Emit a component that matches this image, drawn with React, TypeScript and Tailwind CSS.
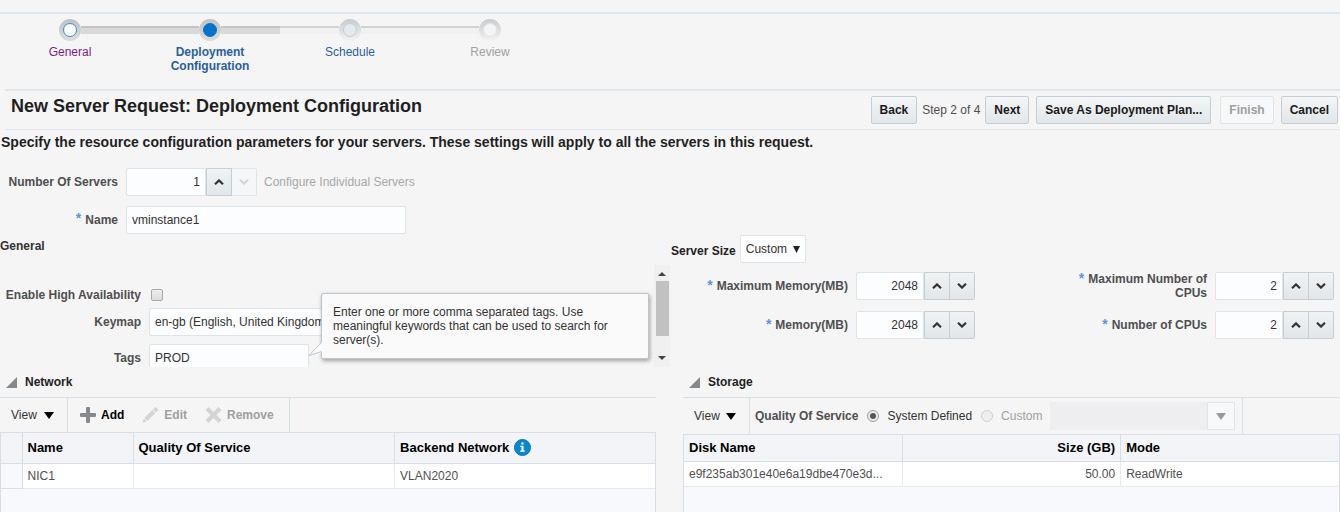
import React from "react";

const inputBox = "h-7 rounded-xs border border-[#dfe4e7] bg-[#fcfdfe] px-[5px] text-xs text-[#333333] outline-none";
const labelText = "text-xs font-bold text-[#4f4f4f]";
const buttonBase = "h-7 rounded-xs border px-2 text-xs font-bold whitespace-nowrap";
const buttonOn = "border-[#c4ced7] bg-linear-to-b from-[#f3f5f6] to-[#e3e7ea] text-[#1a1a1a]";
const buttonOff = "border-[#dfe4e7] bg-[#f6f8fa] text-[#9e9e9e]";

function Chevron({ up }: { up?: boolean }) {
  return (
    <svg width="10" height="6" viewBox="0 0 10 6" fill="none" stroke="currentColor" strokeWidth="2.2" aria-hidden="true">
      {up ? <path d="M1 5.2 L5 1.4 L9 5.2" /> : <path d="M1 0.8 L5 4.6 L9 0.8" />}
    </svg>
  );
}

function Caret({ small }: { small?: boolean }) {
  return small ? (
    <svg width="7" height="7" viewBox="0 0 7 7" fill="currentColor" aria-hidden="true">
      <path d="M0 0 H7 L3.5 7 Z" />
    </svg>
  ) : (
    <svg width="10" height="7" viewBox="0 0 10 7" fill="currentColor" aria-hidden="true">
      <path d="M0 0 H10 L5 7 Z" />
    </svg>
  );
}

function Spinner({ id, value, wide, downDisabled }: { id: string; value: string; wide?: boolean; downDisabled?: boolean }) {
  const step = "flex h-7 items-center justify-center border";
  return (
    <div className="flex shrink-0">
      <input id={id} inputMode="numeric" defaultValue={value} className={`${inputBox} text-right ${wide ? "w-20" : "w-17"}`} />
      <button type="button" aria-label="Increase" className={`${step} w-[26px] border-[#c4ced7] bg-linear-to-b from-[#f0f3f4] to-[#e2e6e9] text-[#333333]`}>
        <Chevron up />
      </button>
      <button
        type="button"
        aria-label="Decrease"
        disabled={downDisabled}
        className={`${step} w-[25px] rounded-r-xs border-l-0 ${downDisabled ? "border-[#dfe4e7] bg-[#f4f6f7] text-[#d2d5d8]" : "border-[#c4ced7] bg-linear-to-b from-[#f0f3f4] to-[#e2e6e9] text-[#333333]"}`}
      >
        <Chevron />
      </button>
    </div>
  );
}

function Required() {
  return <span className="mr-1 self-start text-sm leading-3 font-bold text-[#5b96dc]">*</span>;
}

type Step = { name: string; label: string; ring: string; dot: string; left: string; right: string };

const doneBar = "bg-[#d8d9d9] border-t-2 border-[#c3c5c5]";
const todoBar = "bg-[#f1f1f1] border-t-2 border-[#d0d2d3]";
const doneRing = "bg-linear-to-b from-[#bfc1c2] to-[#dcdddd]";
const todoRing = "bg-linear-to-b from-[#c9cbcc] to-[#f3f3f3]";

const steps: Step[] = [
  { name: "General", label: "text-[#7b1f86]", ring: doneRing, dot: "border-[#3a8ad8] bg-white", left: "", right: doneBar },
  { name: "Deployment Configuration", label: "font-bold text-[#2a5f9e]", ring: doneRing, dot: "border-[#0572ce] bg-[#0572ce]", left: doneBar, right: doneBar },
  { name: "Schedule", label: "text-[#2a5f9e]", ring: todoRing, dot: "border-[#c4ced7] bg-[#e5e9ec]", left: todoBar, right: todoBar },
  { name: "Review", label: "text-[#a0a0a0]", ring: todoRing, dot: "border-[#dfe6eb] bg-[#f3f5f7]", left: todoBar, right: "" },
];

function Train() {
  return (
    <ol className="flex h-[75px] pt-[5px]">
      {steps.map((s) => (
        <li key={s.name} className="w-[140px] text-center text-xs leading-[14px]">
          <div className="flex items-center">
            <span className={`h-2 flex-1 ${s.left}`} />
            <span className={`flex size-[22px] items-center justify-center rounded-full ${s.ring}`}>
              <span className={`size-[14px] rounded-full border ${s.dot}`} />
            </span>
            <span className={`h-2 flex-1 ${s.right}`} />
          </div>
          <a href="#" className={`mx-auto mt-1 block w-20 ${s.label}`}>{s.name}</a>
        </li>
      ))}
    </ol>
  );
}

function SectionTitle({ children }: { children: React.ReactNode }) {
  return (
    <h2 className="flex h-[31px] items-center gap-2 border-b border-[#d6dfe6] pl-1.5 text-xs font-bold text-[#222222]">
      <svg width="11" height="11" viewBox="0 0 11 11" aria-hidden="true">
        <path d="M11 0 V11 H0 Z" fill="#85898d" />
      </svg>
      {children}
    </h2>
  );
}

const th = "border border-[#d6dfe6] bg-[#f2f4f8] px-[5px] text-left text-[13px] font-bold text-black";
const td = "border-x border-b border-[#e6eaed] bg-white px-[5px] text-[#4f4f4f]";

function GeneralPanel() {
  return (
    <div className="relative flex h-[102px] overflow-hidden">
      <div className="grid flex-1 grid-cols-[141px_1fr] content-start items-center gap-x-2 pt-4">
        <label htmlFor="ha" className={`text-right whitespace-nowrap ${labelText}`}>Enable High Availability</label>
        <div className="flex h-[27px] items-center pl-0.5">
          <input id="ha" type="checkbox" className="size-3 appearance-none rounded-xs border border-[#a9a9a9] bg-linear-to-b from-[#eeeeee] to-[#dcdcdc]" />
        </div>
        <label htmlFor="keymap" className={`text-right ${labelText}`}>Keymap</label>
        <select id="keymap" className={`w-[210px] appearance-none ${inputBox}`}>
          <option>en-gb (English, United Kingdom)</option>
        </select>
        <label htmlFor="tags" className={`mt-2 text-right ${labelText}`}>Tags</label>
        <input id="tags" defaultValue="PROD" className={`mt-2 w-40 ${inputBox}`} />
      </div>
      <div className="flex w-4 flex-col items-center justify-between bg-[#f0f0f0] py-[7px] text-[#444444]">
        <svg width="8" height="4" viewBox="0 0 8 4" fill="currentColor" aria-hidden="true"><path d="M0 4 L4 0 L8 4 Z" /></svg>
        <span className="mb-4 h-[55px] w-[13px] bg-[#c1c1c1]" />
        <svg width="8" height="4" viewBox="0 0 8 4" fill="currentColor" aria-hidden="true"><path d="M0 0 L4 4 L8 0 Z" /></svg>
      </div>
      <div role="tooltip" className="absolute top-[28px] left-[321px] w-[328px] rounded-xs border border-[#bcc6cf] bg-[#fafafa] px-[11px] py-[11px] text-xs leading-[14px] text-[#333333] shadow-[1px_2px_4px_rgba(0,0,0,0.35)]">
        Enter one or more comma separated tags. Use<br />meaningful keywords that can be used to search for<br />server(s).
        <svg className="absolute bottom-px -left-[14px]" width="15" height="15" viewBox="0 0 15 15" aria-hidden="true">
          <path d="M15 0 H14 L0.8 13.6 L14 10 H15 Z" fill="#fafafa" />
          <path d="M13.5 0.5 L0.8 13.6 L13.5 9.5" fill="none" stroke="#bcc6cf" />
        </svg>
      </div>
    </div>
  );
}

function Network() {
  return (
    <section className="mr-[14px] flex flex-1 flex-col">
      <SectionTitle>Network</SectionTitle>
      <div className="flex h-[34px] text-xs">
        <button type="button" className="flex w-[68px] items-center gap-[7px] border-r border-[#d6dfe6] pl-[11px] text-[#333333]">
          View <span className="text-black"><Caret /></span>
        </button>
        <div className="flex items-center gap-[18px] border-r border-[#d6dfe6] pr-[15px] pl-3 font-bold">
          <button type="button" className="flex items-center gap-[5px] text-black">
            <svg width="16" height="16" viewBox="0 0 16 16" fill="#85898d" aria-hidden="true">
              <path d="M6 1 Q6 0 7 0 H9 Q10 0 10 1 V6 H15 Q16 6 16 7 V9 Q16 10 15 10 H10 V15 Q10 16 9 16 H7 Q6 16 6 15 V10 H1 Q0 10 0 9 V7 Q0 6 1 6 H6 Z" />
            </svg>
            Add
          </button>
          <button type="button" disabled className="flex items-center gap-[5px] text-[#a0a0a0]">
            <svg width="17" height="16" viewBox="0 0 17 16" fill="#d2d4d6" aria-hidden="true">
              <path d="M0.5 15.8 L1.8 11.6 L4.7 14.4 Z M2.3 11 L10.4 3 L13.4 6 L5.3 14 Z M11.1 2.4 L13 0.5 Q13.7 0 14.4 0.6 L15.9 2.1 Q16.4 2.8 15.9 3.4 L14 5.3 Z" />
            </svg>
            Edit
          </button>
          <button type="button" disabled className="flex items-center gap-[5px] text-[#a0a0a0]">
            <svg width="17" height="16" viewBox="0 0 17 16" stroke="#d2d4d6" strokeWidth="4.2" aria-hidden="true">
              <path d="M2 1.5 L15 14.5 M15 1.5 L2 14.5" />
            </svg>
            Remove
          </button>
        </div>
      </div>
      <div className="flex-1 border-x border-[#d6dfe6] bg-[#f7f9fc]">
        <table className="w-full table-fixed border-collapse text-xs">
          <colgroup>
            <col className="w-[21px]" />
            <col className="w-[111px]" />
            <col className="w-[40%]" />
            <col />
          </colgroup>
          <thead>
            <tr className="h-[31px]">
              <th className={`${th} border-l-0`} aria-label="Select" />
              <th className={th}>Name</th>
              <th className={th}>Quality Of Service</th>
              <th className={`${th} border-r-0`}>
                <span className="flex items-center gap-[5px]">
                  Backend Network
                  <svg width="17" height="17" viewBox="0 0 17 17" aria-hidden="true">
                    <circle cx="8.5" cy="8.5" r="8" fill="#0a86d1" stroke="#0b73b5" />
                    <path d="M7.3 3.6 H9.5 V5.4 H7.3 Z M6.3 6.8 H9.5 V11.6 H10.7 V12.8 H6.3 V11.6 H7.5 V8 H6.3 Z" fill="#ffffff" />
                  </svg>
                </span>
              </th>
            </tr>
          </thead>
          <tbody>
            <tr className="h-[25px]">
              <td className="border-r border-b border-[#d6dfe6] bg-[#f7f9fc]" />
              <td className={td}>NIC1</td>
              <td className={td} />
              <td className={`${td} border-r-0`}>VLAN2020</td>
            </tr>
          </tbody>
        </table>
      </div>
    </section>
  );
}

const radio = "mr-2 grid size-3 appearance-none place-content-center rounded-full border";

function Storage() {
  return (
    <section className="ml-[13px] flex flex-1 flex-col">
      <SectionTitle>Storage</SectionTitle>
      <div className="flex h-9 text-xs text-[#333333]">
        <button type="button" className="flex w-[67px] items-center gap-1.5 border-r border-[#d6dfe6] pl-[11px]">
          View <span className="text-black"><Caret /></span>
        </button>
        <fieldset className="flex items-center border-r border-[#d6dfe6] pr-[7px] pl-[5px]">
          <legend className={`float-left mr-[9px] ${labelText}`}>Quality Of Service</legend>
          <label className="flex items-center">
            <input type="radio" name="qos" defaultChecked className={`${radio} border-[#9b9b9b] bg-[#eeeeee] before:size-1.5 before:rounded-full before:bg-[#555555]`} />
            System Defined
          </label>
          <label className="ml-[9px] flex items-center text-[#a0a0a0]">
            <input type="radio" name="qos" disabled className={`${radio} border-[#cfcfcf] bg-[#eeeeee]`} />
            Custom
          </label>
          <div className="ml-2 flex">
            <input disabled aria-label="Custom quality of service" className="h-7 w-[157px] bg-[#eeeef0]" />
            <button type="button" disabled aria-label="Open list" className="flex h-7 w-7 items-center justify-center border border-[#dfe6eb] bg-[#f7f9fa] text-[#999999]">
              <Caret />
            </button>
          </div>
        </fieldset>
      </div>
      <div className="flex-1 border-x border-[#d6dfe6] bg-[#f7f9fc]">
        <table className="w-full table-fixed border-collapse text-xs">
          <thead>
            <tr className="h-[27px]">
              <th className={`${th} border-l-0`}>Disk Name</th>
              <th className={`${th} text-right`}>Size (GB)</th>
              <th className={`${th} border-r-0`}>Mode</th>
            </tr>
          </thead>
          <tbody>
            <tr className="h-[25px]">
              <td className={`${td} border-l-0`}>e9f235ab301e40e6a19dbe470e3d...</td>
              <td className={`${td} text-right`}>50.00</td>
              <td className={`${td} border-r-0`}>ReadWrite</td>
            </tr>
          </tbody>
        </table>
      </div>
    </section>
  );
}

function SizeField({ id, label, value }: { id: string; label: string; value: string }) {
  return (
    <div className="flex items-center justify-end gap-2">
      <label htmlFor={id} className={`flex text-right leading-[14px] ${labelText}`}>
        <Required />
        <span className="whitespace-pre">{label}</span>
      </label>
      <Spinner id={id} value={value} />
    </div>
  );
}

export default function App() {
  return (
    <div className="flex min-h-screen flex-col bg-[#f5f5f5] bg-[linear-gradient(45deg,#f7f7f7_25%,#f3f3f3_25%,#f3f3f3_50%,#f7f7f7_50%,#f7f7f7_75%,#f3f3f3_75%)] bg-size-[4px_4px] font-['Liberation_Sans',Arial,sans-serif]">
      <nav aria-label="Progress" className="mt-3 border-t-2 border-[#dfe6ed]">
        <Train />
      </nav>
      <header className="ml-[5px] flex h-[41px] items-center justify-between border-t-2 border-b border-[#dfe6ed] pr-[2px] pl-1.5">
        <h1 className="pb-2 text-lg leading-6 font-bold text-[#1f1f1f]">New Server Request: Deployment Configuration</h1>
        <div className="flex items-center text-xs text-[#4f4f4f]">
          <button type="button" className={`${buttonBase} ${buttonOn}`}>Back</button>
          <span className="mx-[5px]">Step 2 of 4</span>
          <button type="button" className={`${buttonBase} ${buttonOn}`}>Next</button>
          <button type="button" className={`ml-[7px] ${buttonBase} ${buttonOn}`}>Save As Deployment Plan...</button>
          <button type="button" disabled className={`ml-[9px] ${buttonBase} ${buttonOff}`}>Finish</button>
          <button type="button" className={`ml-[7px] ${buttonBase} ${buttonOn}`}>Cancel</button>
        </div>
      </header>
      <main className="flex flex-1 flex-col">
        <p className="pl-px text-sm leading-6 font-bold text-[#1f1f1f]">
          Specify the resource configuration parameters for your servers. These settings will apply to all the servers in this request.
        </p>
        <div className="grid grid-cols-[118px_1fr] items-center gap-x-2 gap-y-2.5 pt-3.5">
          <label htmlFor="servers" className={`text-right ${labelText}`}>Number Of Servers</label>
          <div className="flex items-center gap-[7px]">
            <Spinner id="servers" value="1" wide downDisabled />
            <span className="text-xs text-[#a8a8a8]">Configure Individual Servers</span>
          </div>
          <label htmlFor="name" className={`flex items-center justify-end ${labelText}`}>
            <Required />
            Name
          </label>
          <input id="name" defaultValue="vminstance1" className={`w-[280px] ${inputBox}`} />
        </div>
        <div className="grid flex-1 grid-cols-2">
          <div className="flex flex-col">
            <h2 className="h-[31px] pt-1 text-xs leading-4 font-bold text-[#333333]">General</h2>
            <GeneralPanel />
            <Network />
          </div>
          <div className="flex flex-col">
            <div className="flex h-[30px] items-center gap-1 pl-px">
              <label htmlFor="size" className="pt-1 text-xs font-bold text-[#222222]">Server Size</label>
              <div className="relative flex items-center">
                <select id="size" className={`w-[66px] appearance-none ${inputBox}`}>
                  <option>Custom</option>
                </select>
                <span className="pointer-events-none absolute right-1.5 text-[#222222]"><Caret small /></span>
              </div>
            </div>
            <div className="grid h-[103px] grid-cols-[305px_1fr] content-start gap-y-[11px] pt-2 pr-1.5">
              <SizeField id="maxmem" label="Maximum Memory(MB)" value="2048" />
              <SizeField id="maxcpu" label={"Maximum Number of\nCPUs"} value="2" />
              <SizeField id="mem" label="Memory(MB)" value="2048" />
              <SizeField id="cpu" label="Number of CPUs" value="2" />
            </div>
            <Storage />
          </div>
        </div>
      </main>
    </div>
  );
}
